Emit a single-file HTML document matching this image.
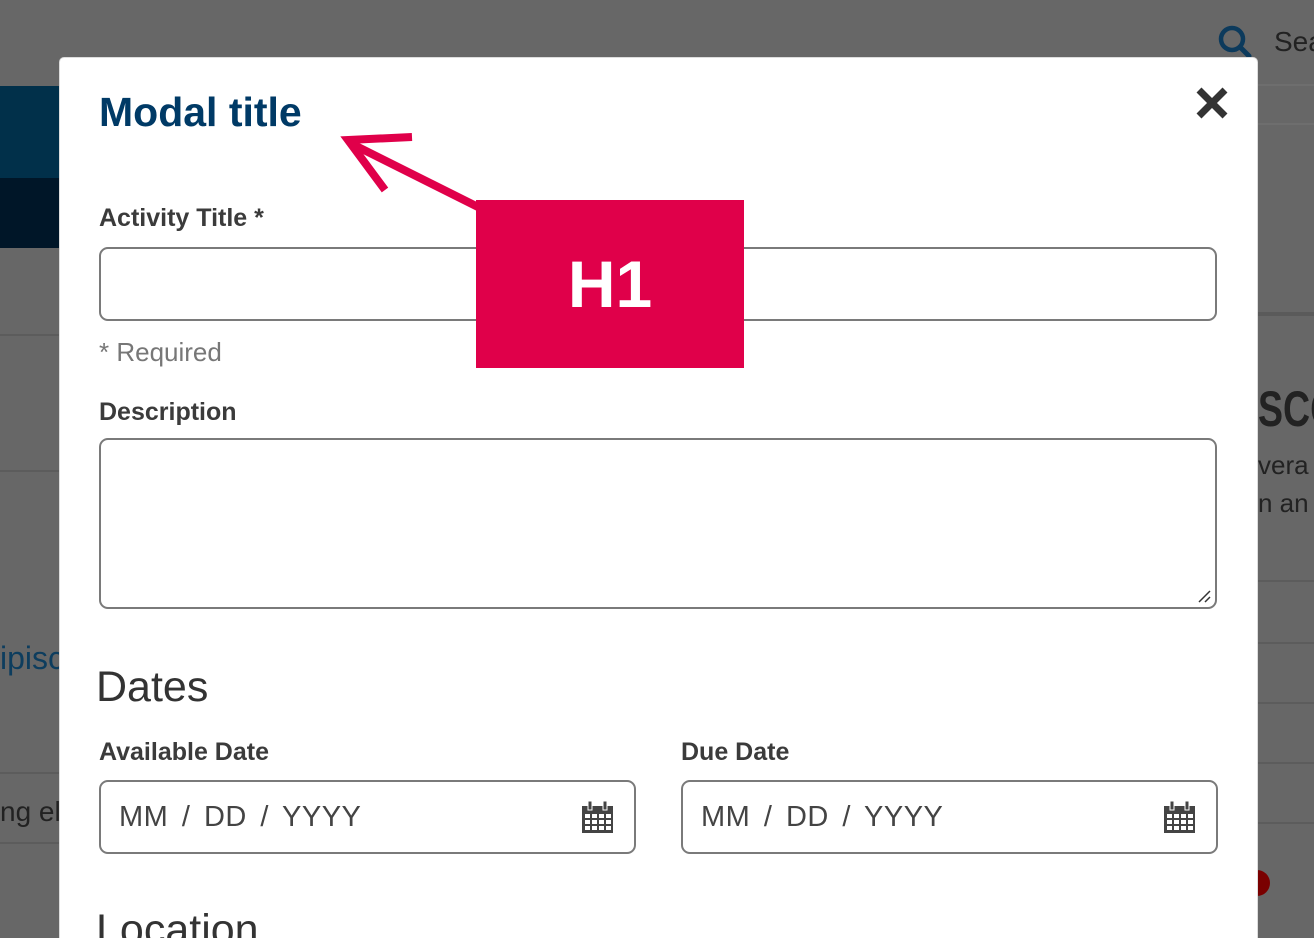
<!DOCTYPE html>
<html><head><style>
*{box-sizing:border-box;margin:0;padding:0}
html,body{width:1314px;height:938px;overflow:hidden}
body{background:#676767;position:relative;font-family:"Liberation Sans",sans-serif;color:#333}
.a{position:absolute}
.line{position:absolute;height:2px;background:#5c5c5c}
.modal{position:absolute;left:59px;top:57px;width:1199px;height:881px;background:#fff;border-radius:5px 5px 0 0;border:1px solid #ddd;border-bottom:none;overflow:hidden}
.lbl{position:absolute;font-size:25px;font-weight:bold;color:#3b3b3b}
.inp{position:absolute;border:2px solid #7a7a7a;border-radius:9px;background:#fff}
.date{font-size:29px;color:#444;padding:19px 0 0 18px;letter-spacing:0.5px;word-spacing:5px}
</style></head><body>
<div class="a" style="left:0;top:86px;width:60px;height:92px;background:#01304a"></div>
<div class="a" style="left:0;top:178px;width:60px;height:70px;background:#001628"></div>
<div class="line" style="left:0;top:334px;width:60px"></div>
<div class="line" style="left:0;top:470px;width:60px"></div>
<div class="line" style="left:0;top:772px;width:60px"></div>
<div class="line" style="left:0;top:842px;width:60px"></div>
<div class="a" style="left:0;top:640px;font-size:32px;color:#0d3d5e">ipisc</div>
<div class="a" style="left:0;top:796px;font-size:28px;color:#222">ng eli</div>
<div class="line" style="left:1258px;top:84px;width:56px;background:#6e6e6e"></div>
<div class="line" style="left:1258px;top:123px;width:56px;background:#6e6e6e"></div>
<div class="line" style="left:1258px;top:312px;width:56px;height:4px;background:#5a5a5a"></div>
<div class="line" style="left:1258px;top:580px;width:56px"></div>
<div class="line" style="left:1258px;top:642px;width:56px"></div>
<div class="line" style="left:1258px;top:702px;width:56px"></div>
<div class="line" style="left:1258px;top:762px;width:56px"></div>
<div class="line" style="left:1258px;top:822px;width:56px"></div>
<div class="a" style="left:1244px;top:870px;width:26px;height:26px;border-radius:50%;background:#7a0000"></div>
<div class="a" style="left:1258px;top:380px;font-size:50px;font-weight:bold;color:#222;transform:scaleX(.75);transform-origin:left">SCO</div>
<div class="a" style="left:1258px;top:450px;font-size:26px;color:#222">vera</div>
<div class="a" style="left:1258px;top:488px;font-size:26px;color:#222">n an</div>
<svg class="a" style="left:1217px;top:24px" width="36" height="36" viewBox="0 0 36 36"><circle cx="15" cy="15" r="11" fill="none" stroke="#0c3a5c" stroke-width="4.5"/><path d="M23 23l9 9" stroke="#0c3a5c" stroke-width="5" stroke-linecap="round"/></svg>
<div class="a" style="left:1274px;top:26px;font-size:28px;color:#222">Sea</div>

<div class="modal">
<div class="a" style="left:39px;top:31px;font-size:41px;font-weight:bold;color:#003a66">Modal title</div>
<svg class="a" style="left:1135px;top:28px" width="34" height="34" viewBox="0 0 34 34"><path d="M4 4L30 30M30 4L4 30" stroke="#333" stroke-width="7"/></svg>
<div class="lbl" style="left:39px;top:146px">Activity Title *</div>
<div class="inp" style="left:39px;top:189px;width:1118px;height:74px"></div>
<div class="a" style="left:39px;top:279px;font-size:26px;color:#777">* Required</div>
<div class="lbl" style="left:39px;top:340px">Description</div>
<div class="inp" style="left:39px;top:380px;width:1118px;height:171px"><svg class="a" style="right:4px;bottom:4px" width="14" height="14"><path d="M2 13L13 2M8 13L13 8" stroke="#333" stroke-width="1.5"/></svg></div>
<div class="a" style="left:36px;top:605px;font-size:43px;color:#333">Dates</div>
<div class="lbl" style="left:39px;top:680px">Available Date</div>
<div class="lbl" style="left:621px;top:680px">Due Date</div>
<div class="inp date" style="left:39px;top:722px;width:537px;height:74px">MM / DD / YYYY</div>
<div class="inp date" style="left:621px;top:722px;width:537px;height:74px">MM / DD / YYYY</div>
<svg class="a" style="left:521px;top:742px" width="33" height="34" viewBox="0 0 33 34"><rect x="1" y="6" width="31" height="27" fill="#444"/><rect x="7" y="1" width="4" height="9" fill="#444" stroke="#fff" stroke-width="1"/><rect x="22" y="1" width="4" height="9" fill="#444" stroke="#fff" stroke-width="1"/><g fill="#fff"><rect x="4" y="14" width="5" height="4"/><rect x="11" y="14" width="5" height="4"/><rect x="18" y="14" width="5" height="4"/><rect x="25" y="14" width="5" height="4"/><rect x="4" y="20" width="5" height="4"/><rect x="11" y="20" width="5" height="4"/><rect x="18" y="20" width="5" height="4"/><rect x="25" y="20" width="5" height="4"/><rect x="4" y="26" width="5" height="4"/><rect x="11" y="26" width="5" height="4"/><rect x="18" y="26" width="5" height="4"/><rect x="25" y="26" width="5" height="4"/></g></svg>
<svg class="a" style="left:1103px;top:742px" width="33" height="34" viewBox="0 0 33 34"><rect x="1" y="6" width="31" height="27" fill="#444"/><rect x="7" y="1" width="4" height="9" fill="#444" stroke="#fff" stroke-width="1"/><rect x="22" y="1" width="4" height="9" fill="#444" stroke="#fff" stroke-width="1"/><g fill="#fff"><rect x="4" y="14" width="5" height="4"/><rect x="11" y="14" width="5" height="4"/><rect x="18" y="14" width="5" height="4"/><rect x="25" y="14" width="5" height="4"/><rect x="4" y="20" width="5" height="4"/><rect x="11" y="20" width="5" height="4"/><rect x="18" y="20" width="5" height="4"/><rect x="25" y="20" width="5" height="4"/><rect x="4" y="26" width="5" height="4"/><rect x="11" y="26" width="5" height="4"/><rect x="18" y="26" width="5" height="4"/><rect x="25" y="26" width="5" height="4"/></g></svg>
<div class="a" style="left:36px;top:848px;font-size:43px;color:#333">Location</div>
</div>

<svg class="a" style="left:340px;top:128px" width="150" height="90" viewBox="0 0 150 90"><path d="M140 80L10 15" stroke="#e0004a" stroke-width="8"/><path d="M72 9L8 12L45 62" fill="none" stroke="#e0004a" stroke-width="8"/></svg>
<div class="a" style="left:476px;top:200px;width:268px;height:168px;background:#e0004a;color:#fff;font-size:66px;font-weight:bold;text-align:center;line-height:168px">H1</div>
</body></html>
